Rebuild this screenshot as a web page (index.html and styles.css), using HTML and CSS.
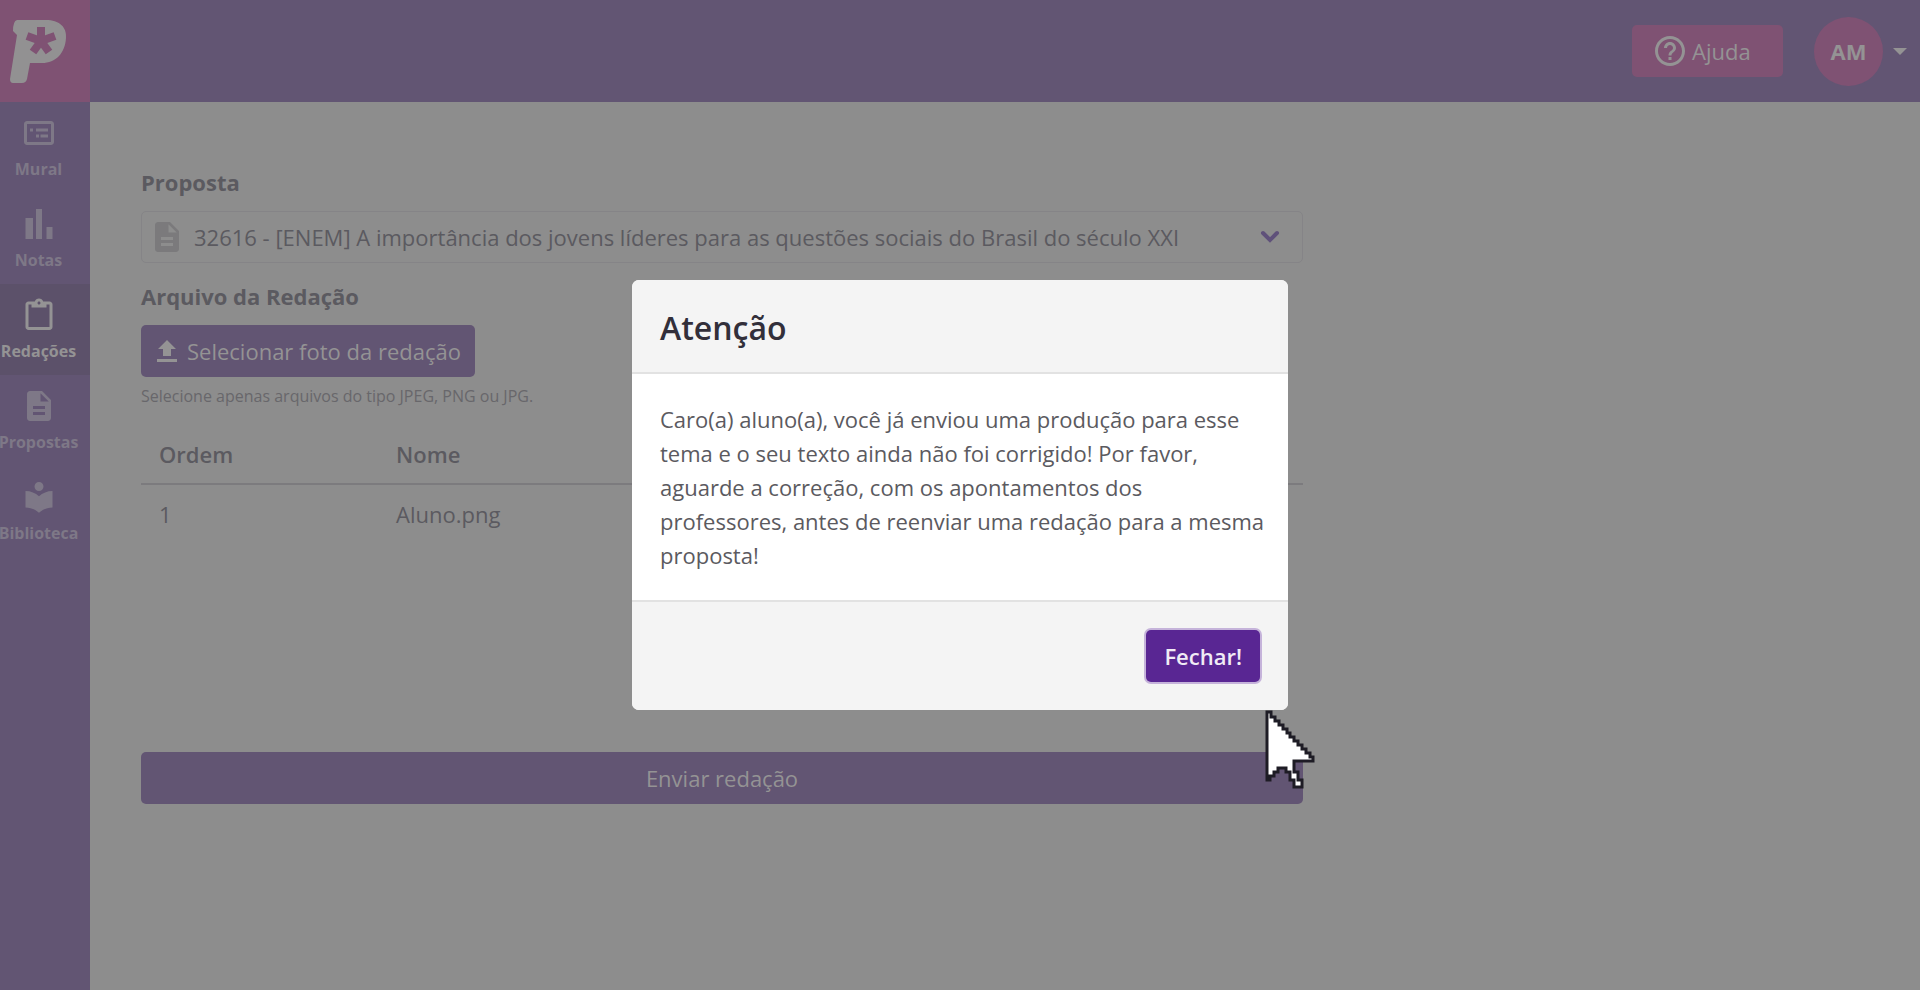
FILE: index.html
```html
<!DOCTYPE html>
<html lang="pt-BR">
<head>
  <meta charset="UTF-8">
  <meta name="viewport" content="width=device-width, initial-scale=1.0">
  <title>Redações</title>
  <link rel="stylesheet" href="styles.css">
</head>
<body>
  <header class="topbar">
    <a class="logo" href="#" aria-label="Início">
      <svg viewBox="0 0 90 102" aria-hidden="true">
        <path class="logo-letter" d="M17 20H46C59 20 67 27 66 38C65 53 56 63 42 63H30L27 79Q26 83 22 83H13Q10 83 10 79L17 35L13 31Q13 21 17 20Z"/>
        <path class="logo-star" d="M41 41V27M41 41L27 36M41 41L55 36M41 41L33 52M41 41L49 52"/>
      </svg>
    </a>
    <div class="topbar-actions">
      <button type="button" class="btn-help">
        <svg class="icon-help" viewBox="0 0 24 24" aria-hidden="true"><path d="M11 18h2v-2h-2v2zm1-16C6.480 2 2 6.480 2 12s4.480 10 10 10 10-4.480 10-10S17.520 2 12 2zm0 18c-4.410 0-8-3.590-8-8s3.590-8 8-8 8 3.590 8 8-3.590 8-8 8zm0-14c-2.210 0-4 1.790-4 4h2c0-1.100.9-2 2-2s2 .9 2 2c0 2-3 1.750-3 5h2c0-2.250 3-2.500 3-5 0-2.210-1.790-4-4-4z"/></svg>
        Ajuda
      </button>
      <button type="button" class="user-menu" aria-label="Menu do usuário">
        <span class="avatar">AM</span>
        <span class="caret"></span>
      </button>
    </div>
  </header>

  <div class="layout">
    <nav class="sidebar">
      <a href="#" class="nav-item">
        <svg viewBox="0 0 24 24" aria-hidden="true"><path d="M20 4H4c-1.100 0-2 .9-2 2v12c0 1.100.9 2 2 2h16c1.100 0 2-.9 2-2V6c0-1.100-.9-2-2-2zm0 14H4V6h16v12zM6 9h2v2H6zM10 9h8v2h-8zM10 13h2v2h-2zM13 13h5v2h-5z"/></svg>
        <span>Mural</span>
      </a>
      <a href="#" class="nav-item">
        <svg viewBox="0 0 24 24" aria-hidden="true"><path d="M3 8h5v14H3zM10 2h4v20h-4zM17 14h4v8h-4z"/></svg>
        <span>Notas</span>
      </a>
      <a href="#" class="nav-item active">
        <svg viewBox="0 0 24 24" aria-hidden="true"><path d="M19 3h-4.180C14.400 1.840 13.300 1 12 1s-2.400.84-2.820 2H5c-1.100 0-2 .9-2 2v15c0 1.100.9 2 2 2h14c1.100 0 2-.9 2-2V5c0-1.100-.9-2-2-2zm-7 0c.55 0 1 .45 1 1s-.45 1-1 1-1-.45-1-1 .45-1 1-1zm7 17H5V5h2v2h10V5h2v15z"/></svg>
        <span>Redações</span>
      </a>
      <a href="#" class="nav-item">
        <svg viewBox="0 0 24 24" aria-hidden="true"><path d="M14 2H6c-1.100 0-1.990.9-1.990 2L4 20c0 1.100.89 2 1.990 2H18c1.100 0 2-.9 2-2V8l-6-6zm2 16H8v-2h8v2zm0-4H8v-2h8v2zm-3-5V3.500L18.500 9H13z"/></svg>
        <span>Propostas</span>
      </a>
      <a href="#" class="nav-item">
        <svg viewBox="0 0 24 24" aria-hidden="true"><path d="M12 11.550C9.640 9.350 6.480 8 3 8v11c3.480 0 6.640 1.350 9 3.550 2.360-2.190 5.520-3.550 9-3.550V8c-3.480 0-6.640 1.350-9 3.550zM12 8c1.660 0 3-1.340 3-3s-1.340-3-3-3-3 1.340-3 3 1.340 3 3 3z"/></svg>
        <span>Biblioteca</span>
      </a>
    </nav>

    <main class="content">
      <form class="essay-form">
        <label class="field-label" for="proposta">Proposta</label>
        <div class="select-box">
          <svg class="select-icon" viewBox="0 0 24 24" aria-hidden="true"><path d="M14 2H6c-1.100 0-1.990.9-1.990 2L4 20c0 1.100.89 2 1.990 2H18c1.100 0 2-.9 2-2V8l-6-6zm2 16H8v-2h8v2zm0-4H8v-2h8v2zm-3-5V3.500L18.500 9H13z"/></svg>
          <select id="proposta" name="proposta">
            <option>32616 - [ENEM] A importância dos jovens líderes para as questões sociais do Brasil do século XXI</option>
          </select>
          <svg class="select-arrow" viewBox="0 0 20 14" aria-hidden="true"><path d="M3 3l7 7 7-7"/></svg>
        </div>

        <label class="field-label" for="arquivo">Arquivo da Redação</label>
        <button type="button" class="btn btn-upload" id="arquivo">
          <svg viewBox="0 0 24 24" aria-hidden="true"><path d="M8 17h8v-7h5l-9-9-9 9h5v7zM2 20h20v3H2z"/></svg>
          Selecionar foto da redação
        </button>
        <p class="hint">Selecione apenas arquivos do tipo JPEG, PNG ou JPG.</p>

        <table class="files">
          <thead>
            <tr><th class="col-order">Ordem</th><th>Nome</th></tr>
          </thead>
          <tbody>
            <tr><td>1</td><td>Aluno.png</td></tr>
          </tbody>
        </table>

        <button type="submit" class="btn btn-submit">Enviar redação</button>
      </form>
    </main>
  </div>

  <div class="modal-backdrop">
    <div class="modal" role="dialog" aria-modal="true" aria-labelledby="modal-title">
      <div class="modal-header">
        <h2 id="modal-title">Atenção</h2>
      </div>
      <div class="modal-body">
        <p>Caro(a) aluno(a), você já enviou uma produção para esse tema e o seu texto ainda não foi corrigido! Por favor, aguarde a correção, com os apontamentos dos professores, antes de reenviar uma redação para a mesma proposta!</p>
      </div>
      <div class="modal-footer">
        <button type="button" class="btn-close">Fechar!</button>
      </div>
      <svg class="cursor" viewBox="0 0 54 82" aria-hidden="true"><path d="M4 4V72H7V68H11V64H15V60H23V64H27V72H31V79H39V72H35V64H31V53H50V49H47V45H43V41H39V37H35V33H31V29H27V25H24V21H20V17H16V13H12V9H8V4Z"/></svg>
    </div>
  </div>
</body>
</html>
```

FILE: styles.css
```css
/* Reset */
* {
  margin: 0;
  padding: 0;
  box-sizing: border-box;
}

body {
  min-height: 100vh;
  display: flex;
  flex-direction: column;
  background: #8d8d8d;
  color: #5b5a60;
  font-family: 'Open Sans', 'Noto Sans', sans-serif;
  font-size: 22px;
  line-height: 34px;
}

button,
select {
  font: inherit;
  border: none;
  cursor: pointer;
}

/* Top bar */
.topbar {
  height: 102px;
  display: flex;
  justify-content: space-between;
  background: #625573;
}

.logo {
  width: 90px;
  background: #7f5273;
}

.logo svg {
  display: block;
}

.logo-letter {
  fill: #929192;
}

.logo-star {
  fill: none;
  stroke: #7f5273;
  stroke-width: 8;
}

.topbar-actions {
  display: flex;
  align-items: center;
  gap: 31px;
  padding-right: 13px;
}

.btn-help {
  width: 151px;
  height: 52px;
  display: flex;
  align-items: center;
  gap: 4px;
  padding-left: 20px;
  border-radius: 5px;
  background: #7f5273;
  color: #949394;
}

.icon-help {
  width: 36px;
  height: 36px;
  fill: currentColor;
}

.user-menu {
  display: flex;
  align-items: center;
  gap: 10px;
  background: none;
  color: #949394;
}

.avatar {
  width: 69px;
  height: 69px;
  border-radius: 50%;
  background: #7f5273;
  font-weight: bold;
  line-height: 69px;
}

.caret {
  border: 7px solid transparent;
  border-top-color: #949394;
  border-bottom: none;
}

/* Sidebar */
.layout {
  flex: 1;
  display: flex;
}

.sidebar {
  width: 90px;
  background: #625573;
}

.nav-item {
  height: 91px;
  display: flex;
  flex-direction: column;
  align-items: center;
  gap: 8px;
  padding: 13px 13px 0 0;
  color: #7e7887;
  font-size: 16px;
  font-weight: bold;
  line-height: 20px;
  text-decoration: none;
}

.nav-item svg {
  width: 36px;
  height: 36px;
  flex-shrink: 0;
  fill: currentColor;
}

.nav-item.active {
  background: #5c516a;
  color: #949394;
}

/* Form */
.content {
  flex: 1;
  padding: 63px 51px;
}

.essay-form {
  max-width: 1162px;
}

.field-label {
  display: block;
  margin-bottom: 12px;
  font-weight: bold;
}

.select-box {
  position: relative;
  margin-bottom: 16px;
}

.select-box select {
  width: 100%;
  height: 52px;
  padding: 0 50px 0 52px;
  border: 1px solid #858487;
  border-radius: 5px;
  background: transparent;
  color: #5b5a60;
  appearance: none;
}

.select-icon {
  position: absolute;
  top: 8px;
  left: 8px;
  width: 36px;
  height: 36px;
  fill: #7b7a7c;
}

.select-arrow {
  position: absolute;
  top: 19px;
  right: 23px;
  width: 20px;
  height: 14px;
  fill: none;
  stroke: #5f517a;
  stroke-width: 4;
  stroke-linecap: round;
}

.btn {
  height: 52px;
  border-radius: 5px;
  background: #625573;
  color: #949394;
}

.btn-upload {
  display: flex;
  align-items: center;
  gap: 8px;
  padding: 0 14px 0 14px;
}

.btn-upload svg {
  width: 24px;
  height: 26px;
  fill: currentColor;
}

.hint {
  margin-top: 7px;
  color: #68676b;
  font-size: 16px;
  line-height: 24px;
}

.files {
  width: 100%;
  margin: 16px 0 210px;
  border-collapse: collapse;
}

.files th {
  height: 60px;
  padding: 0 18px;
  border-bottom: 2px solid #7c7b7e;
  font-weight: 600;
  text-align: left;
}

.files td {
  height: 58px;
  padding: 0 18px;
}

.files .col-order {
  width: 237px;
}

.btn-submit {
  width: 100%;
}

/* Modal */
.modal-backdrop {
  position: fixed;
  inset: 0;
  display: flex;
  align-items: center;
  justify-content: center;
}

.modal {
  position: relative;
  width: 656px;
  border-radius: 7px;
  background: #fff;
}

.modal-header {
  padding: 30px 28px 26px;
  border-bottom: 2px solid #e2e2e2;
  border-radius: 7px 7px 0 0;
  background: #f4f4f4;
}

.modal-header h2 {
  color: #322f3a;
  font-size: 32px;
  font-weight: 600;
  line-height: 36px;
}

.modal-body {
  padding: 28px 20px 28px 28px;
}

.modal-footer {
  display: flex;
  justify-content: flex-end;
  padding: 28px;
  border-top: 2px solid #e2e2e2;
  border-radius: 0 0 7px 7px;
  background: #f4f4f4;
}

.btn-close {
  height: 52px;
  padding: 0 18px;
  border-radius: 5px;
  background: #592693;
  box-shadow: 0 0 0 2px #c5b3da;
  color: #f0ebf5;
  font-weight: 600;
}

/* Mouse pointer over the page */
.cursor {
  position: absolute;
  right: -29px;
  bottom: -80px;
  width: 54px;
  height: 82px;
  fill: #fff;
  stroke: #1e1c25;
  stroke-width: 3;
}
```
